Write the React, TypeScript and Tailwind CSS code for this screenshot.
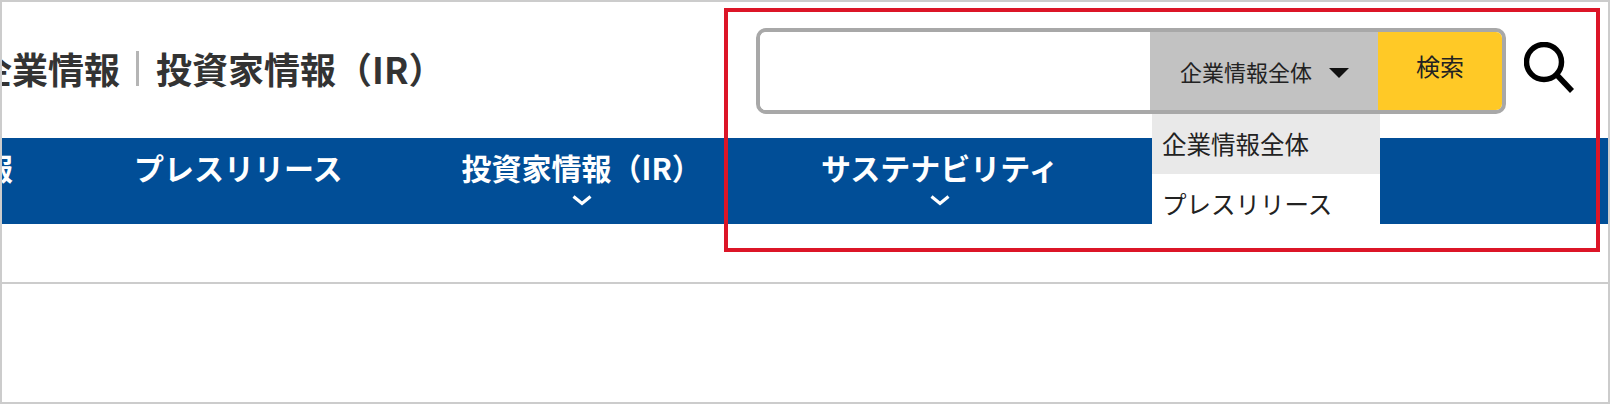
import React from "react";

const font = { fontFamily: '"Noto Sans CJK JP", "Noto Sans", sans-serif' };

function Chevron() {
  return (
    <svg width="20" height="11" viewBox="0 0 20 11" className="block" aria-hidden="true">
      <path d="M1.5 1.5 L10 8.5 L18.5 1.5" fill="none" stroke="#ffffff" strokeWidth="3.2" />
    </svg>
  );
}

function NavItem({ label, chevron }: { label: string; chevron?: boolean }) {
  return (
    <div className="flex flex-col items-center shrink-0">
      <span className="text-[30px] leading-[36px] font-bold text-white whitespace-nowrap">{label}</span>
      {chevron && (
        <span className="mt-[10px]">
          <Chevron />
        </span>
      )}
    </div>
  );
}

export default function App() {
  return (
    <div
      style={font}
      className="relative w-[1610px] h-[404px] overflow-hidden bg-white border-2 border-[#cccccc]"
    >
      <header className="h-[136px] flex justify-between items-start">
        <h1 className="ml-[-26px] mt-[42px] flex items-center text-[36px] leading-[48px] font-bold text-[#333333] whitespace-nowrap">
          <span>企業情報</span>
          <span className="ml-[16px] mr-[17px] w-[3px] h-[35px] bg-[#b5b5b5]" />
          <span>投資家情報（IR）</span>
        </h1>
        <div className="flex items-start mt-[26px] mr-[32px]">
          <div className="relative">
            <form className="w-[750px] h-[86px] flex border-4 border-[#a8a8a8] rounded-[10px] overflow-hidden bg-white">
              <input type="text" className="w-[390px] h-full bg-white outline-none" aria-label="検索" />
              <button
                type="button"
                className="w-[228px] h-full bg-[#c2c2c2] flex items-center pl-[30px] text-[22px] leading-none text-[#222222]"
              >
                <span>企業情報全体</span>
                <svg width="20" height="10" viewBox="0 0 20 10" className="ml-[17px] mt-[3px]" aria-hidden="true">
                  <path d="M0 0 H20 L10 10 Z" fill="#111111" />
                </svg>
              </button>
              <button
                type="button"
                className="w-[124px] h-full bg-[#ffc926] pb-[10px] text-[24px] leading-none text-[#222222]"
              >
                検索
              </button>
            </form>
            <ul className="absolute left-[396px] top-full w-[228px] h-[110px] overflow-hidden bg-white text-[24.5px] text-[#222222] z-10">
              <li className="h-[60px] bg-[#e9e9e9] flex items-center pl-[10px]">企業情報全体</li>
              <li className="h-[60px] flex items-center pl-[10px]">プレスリリース</li>
            </ul>
          </div>
          <svg width="52" height="52" viewBox="0 0 52 52" className="ml-[18px] mt-[14px]" aria-hidden="true">
            <circle cx="20" cy="20" r="17.5" fill="none" stroke="#000000" strokeWidth="5.5" />
            <path d="M32 32 L48 49" fill="none" stroke="#000000" strokeWidth="5.5" />
          </svg>
        </div>
      </header>

      <nav className="h-[86px] bg-[#014e97] flex items-start gap-[118px] pt-[11px]">
        <div className="ml-[-109px]">
          <NavItem label="企業情報" />
        </div>
        <div className="ml-[3px]">
          <NavItem label="プレスリリース" />
        </div>
        <div className="ml-[1px]">
          <NavItem label="投資家情報（IR）" chevron />
        </div>
        <div className="ml-[1px]">
          <NavItem label="サステナビリティ" chevron />
        </div>
      </nav>

      <div className="h-[60px] border-b-2 border-[#cccccc]" />

      <div className="absolute left-[722px] top-[6px] w-[876px] h-[244px] border-4 border-[#dc1527] pointer-events-none" />
    </div>
  );
}
